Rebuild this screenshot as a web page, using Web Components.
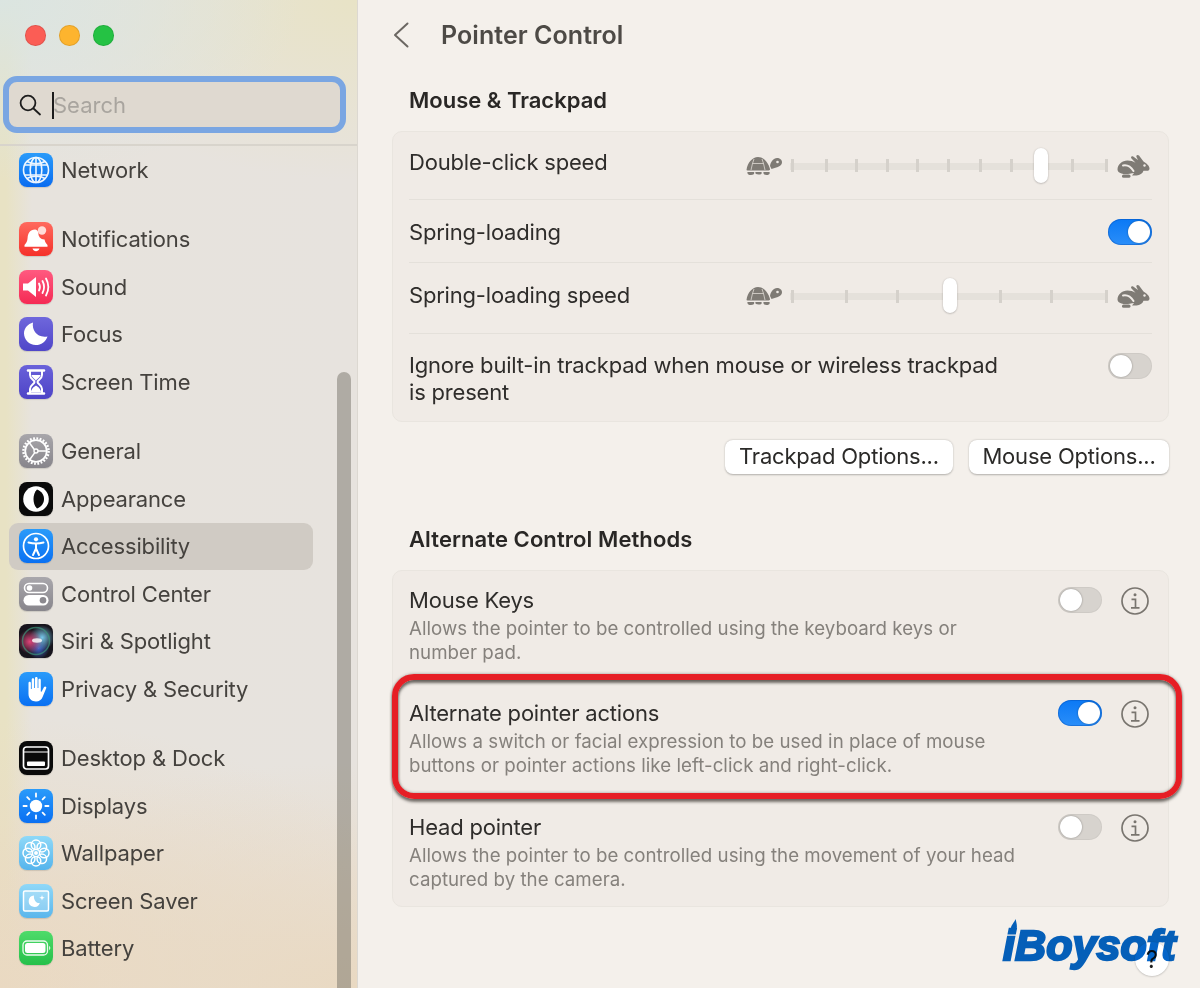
<!DOCTYPE html>
<html lang="en">
<head>
<meta charset="utf-8">
<title>Pointer Control</title>
<style>
html,body{margin:0;padding:0;width:1200px;height:988px;overflow:hidden;background:#f4f0eb;}
body{font-family:Inter,"Liberation Sans",sans-serif;}
</style>
</head>
<body>
<settings-app>
  <side-bar slot="side">
    <side-item icon="network" style="margin-bottom:22px">Network</side-item>
    <side-item icon="bell">Notifications</side-item>
    <side-item icon="sound">Sound</side-item>
    <side-item icon="focus">Focus</side-item>
    <side-item icon="hourglass" style="margin-bottom:22px">Screen Time</side-item>
    <side-item icon="gear">General</side-item>
    <side-item icon="appearance">Appearance</side-item>
    <side-item icon="access" selected>Accessibility</side-item>
    <side-item icon="control">Control Center</side-item>
    <side-item icon="siri">Siri &amp; Spotlight</side-item>
    <side-item icon="hand" style="margin-bottom:22px">Privacy &amp; Security</side-item>
    <side-item icon="dock">Desktop &amp; Dock</side-item>
    <side-item icon="sun">Displays</side-item>
    <side-item icon="flower">Wallpaper</side-item>
    <side-item icon="saver">Screen Saver</side-item>
    <side-item icon="battery">Battery</side-item>
  </side-bar>
  <main-panel slot="main" heading="Pointer Control">
    <section-title style="height:61px">Mouse &amp; Trackpad</section-title>
    <settings-card>
      <setting-row h="68"><span slot="label" style="margin-bottom:7px">Double-click speed</span><speed-slider slot="control" ticks="2,36,66.5,97,127.5,158,190,221,251,282,316.5" thumb="251"></speed-slider></setting-row>
      <setting-row h="63" style="padding-top:2px"><span slot="label">Spring-loading</span><toggle-switch slot="control" on></toggle-switch></setting-row>
      <setting-row h="71"><span slot="label" style="margin-bottom:6px">Spring-loading speed</span><speed-slider slot="control" style="margin-bottom:4px" ticks="2,56,107,159.5,210.5,261.5,316.5" thumb="160"></speed-slider></setting-row>
      <setting-row h="87" last style="padding-top:3px"><span slot="label">Ignore built-in trackpad when mouse or wireless trackpad<br>is present</span><toggle-switch slot="control" style="align-self:flex-start;margin-top:16px"></toggle-switch></setting-row>
    </settings-card>
    <button-bar>
      <option-button style="width:228px">Trackpad Options...</option-button>
      <option-button style="width:200px">Mouse Options...</option-button>
    </button-bar>
    <section-title style="height:63px;margin-top:33px;padding-top:19px;letter-spacing:.08px">Alternate Control Methods</section-title>
    <settings-card>
      <detail-row style="height:113px"><span slot="label">Mouse Keys</span><span slot="desc">Allows the pointer to be controlled using the keyboard keys or<br>number pad.</span></detail-row>
      <detail-row on style="height:114px"><span slot="label">Alternate pointer actions</span><span slot="desc">Allows a switch or facial expression to be used in place of mouse<br>buttons or pointer actions like left-click and right-click.</span></detail-row>
      <detail-row style="height:108px"><span slot="label">Head pointer</span><span slot="desc">Allows the pointer to be controlled using the movement of your head<br>captured by the camera.</span></detail-row>
    </settings-card>
    <highlight-box></highlight-box>
    <help-button></help-button>
    <brand-mark>iBoysoft</brand-mark>
  </main-panel>
</settings-app>

<script>
const ICONS = {
network:{bg:'linear-gradient(#2a9bfa,#0a6cf0)',svg:'<g fill="none" stroke="#fff" stroke-width="1.6" opacity=".92"><circle cx="17" cy="17" r="12.5"/><ellipse cx="17" cy="17" rx="5.8" ry="12.5"/><path d="M17 4.5v25M5.5 12h23M5.5 22h23"/><path d="M8 8.5c5 3 13 3 18 0M8 25.5c5-3 13-3 18 0"/></g>'},
bell:{bg:'linear-gradient(#ff6a5e,#f5312a)',svg:'<path fill="#fff" d="M16 7.500c-5 .4-7.200 3.800-7.400 8.300-.2 3.800-1.300 5.400-3.100 7.200v1.800h23v-1.800c-1.500-1.500-2.600-3-2.900-5.400-3.700.2-6.800-3.200-6.100-7-1-2-2.200-3.200-3.500-3.100z"/><path fill="#fff" d="M13.500 26.500h7c-.6 1.900-2 2.700-3.500 2.700s-2.900-.8-3.500-2.700z"/><circle cx="23" cy="8.500" r="4.200" fill="#ffdcd8"/>'},
sound:{bg:'linear-gradient(#ff5a80,#f52a54)',svg:'<path fill="#fff" d="M4 13.500h5L17 7v20l-8-6.500H4z"/><g fill="none" stroke="#fff" stroke-width="1.800" stroke-linecap="round"><path d="M20 13.500c1.200 2.200 1.200 4.800 0 7"/><path d="M23.500 11c2 3.800 2 8.200 0 12"/><path d="M27 8.500c3 5.400 3 11.600 0 17"/></g>'},
focus:{bg:'linear-gradient(#6f67dc,#5046c8)',svg:'<path fill="#fff" d="M14 5.500c-1.200 7 3.300 14 11.500 14.200 1 0 2-.1 3-.3-1.600 5-6.300 8.600-11.700 8.600C10.100 28 5 22.800 5 16.300 5 11.300 8.900 6.800 14 5.500z"/>'},
hourglass:{bg:'linear-gradient(#6a62da,#4d43c6)',svg:'<g fill="none" stroke="#fff" stroke-width="2"><path d="M9 5.500h16M9 28.500h16" stroke-width="2.600" stroke-linecap="round"/><path d="M11 6v4c0 4 4.500 5 4.500 7s-4.500 3-4.500 7v4M23 6v4c0 4-4.500 5-4.500 7s4.500 3 4.500 7v4"/></g><path fill="#fff" d="M12.500 10h9c-.6 3-4.500 4.500-4.500 6-.2-1.500-3.900-3-4.500-6zM12 27c.2-3.500 3.500-5.500 5-6.500 1.500 1 4.800 3 5 6.500z"/>'},
gear:{bg:'linear-gradient(#a8a6aa,#87858b)',svg:'<g fill="none" stroke="#fff"><circle cx="17" cy="17" r="10.800" stroke-width="1.800"/><circle cx="17" cy="17" r="12.600" stroke-width="2.400" stroke-dasharray="1.800 1.500"/><circle cx="17" cy="17" r="2" stroke-width="1.400"/><path d="M15.500 15.700 10.500 9M19 17h8.500M15.800 18.600 10.800 25.500" stroke-width="1.500"/></g>'},
appearance:{bg:'#0a0a0a',svg:'<circle cx="17" cy="17" r="12.800" fill="#fff"/><path d="M18 7.500C22.800 9.500 25 13 25 17s-2.200 7.500-7 9.500C15.500 24 14.500 20.500 14.500 17s1-7 3.500-9.500z" fill="#0a0a0a"/>'},
access:{bg:'linear-gradient(#2a9bfa,#0a70f2)',svg:'<circle cx="17" cy="17" r="12.500" fill="none" stroke="#fff" stroke-width="1.700"/><circle cx="17" cy="10.300" r="2.100" fill="#fff"/><path fill="none" stroke="#fff" stroke-width="2" stroke-linecap="round" stroke-linejoin="round" d="M9.500 13.500c5 1.300 10 1.300 15 0M17 14.500v6M17 19.500l-3 6.500M17 19.500l3 6.500"/>'},
control:{bg:'linear-gradient(#a9a7ac,#88868c)',svg:'<rect x="5.500" y="6.500" width="23" height="9" rx="4.500" fill="none" stroke="#fff" stroke-width="1.600"/><circle cx="10.500" cy="11" r="2.800" fill="#fff"/><rect x="4.500" y="18" width="25" height="10.500" rx="5.200" fill="#fff"/><circle cx="24" cy="23.200" r="3.300" fill="#8b898f"/>'},
siri:{bg:'radial-gradient(circle at 32% 52%,#e0447a 0,rgba(224,68,122,0) 42%),radial-gradient(circle at 68% 40%,#78c8ea 0,rgba(120,200,234,0) 40%),radial-gradient(circle at 58% 72%,#3f62c8 0,rgba(63,98,200,0) 34%),#17141c',svg:'<circle cx="17" cy="17" r="13.500" fill="none" stroke="#3f9b80" stroke-width="1.500" opacity=".65"/><ellipse cx="18" cy="16.500" rx="5" ry="2.200" fill="#fff" opacity=".8"/>'},
hand:{bg:'linear-gradient(#2a9bfa,#0a70f2)',svg:'<path fill="#fff" d="M9.500 11c0-1.700 2.400-1.700 2.400 0v6h.8V7.500c0-1.700 2.500-1.700 2.500 0V16h.8V6.300c0-1.700 2.600-1.700 2.600 0V16h.8V8c0-1.700 2.400-1.700 2.400 0v11.500l.8.300 2.300-4.500c.9-1.600 3-.7 2.300 1l-3.600 8.700c-1.100 2.800-3.500 4.500-6.600 4.500-4 0-7.500-2.700-7.500-7.500z"/>'},
dock:{bg:'#0a0a0a',svg:'<rect x="4.500" y="6" width="25" height="22" rx="3" fill="none" stroke="#fff" stroke-width="1.700"/><path d="M5 11h24" stroke="#fff" stroke-width="1.200"/><rect x="8" y="20.500" width="18" height="4.500" rx="1" fill="#fff"/>'},
sun:{bg:'linear-gradient(#2a9bfa,#0a6ff2)',svg:'<circle cx="17" cy="17" r="6.200" fill="#fff"/><g stroke="#fff" stroke-width="1.800" stroke-linecap="round"><path d="M17 4.500v3.200M17 26.300v3.200M4.500 17h3.200M26.300 17h3.200M8.200 8.200l2.200 2.200M23.600 23.600l2.200 2.200M25.800 8.200l-2.200 2.200M10.400 23.600l-2.200 2.200"/></g>'},
flower:{bg:'linear-gradient(#8fd9f8,#55b4ec)',svg:'<g fill="none" stroke="#fff" stroke-width="1.500"><circle cx="17" cy="8.800" r="4.800"/><circle cx="17" cy="25.200" r="4.800"/><circle cx="8.800" cy="17" r="4.800"/><circle cx="25.200" cy="17" r="4.800"/><circle cx="11.200" cy="11.200" r="4.800"/><circle cx="22.800" cy="11.200" r="4.800"/><circle cx="11.200" cy="22.800" r="4.800"/><circle cx="22.800" cy="22.800" r="4.800"/></g><circle cx="17" cy="17" r="2" fill="#fff"/>'},
saver:{bg:'linear-gradient(#90d8f8,#5ab6ec)',svg:'<rect x="4.500" y="7" width="25" height="20" rx="1.500" fill="#fff" fill-opacity=".25" stroke="#fff" stroke-width="1.500"/><path fill="#fff" d="M15 11.500a5.700 5.700 0 1 0 5.800 7.500c-3.600.6-6.500-3.300-5.800-7.500z"/><path fill="#fff" d="M23 11l.7 2 2 .7-2 .7-.7 2-.7-2-2-.7 2-.7z"/>'},
battery:{bg:'linear-gradient(#4edb6a,#26c04a)',svg:'<rect x="4" y="10" width="24.500" height="14" rx="4" fill="none" stroke="#fff" stroke-width="1.300" opacity=".9"/><rect x="6" y="12" width="20.500" height="10" rx="2.500" fill="#fff"/><path d="M30 15v4c.8-.3 1.300-1 1.300-2s-.5-1.700-1.300-2z" fill="#fff" opacity=".8"/>'}
};

function el(name, tpl, extra){
  customElements.define(name, class extends HTMLElement{
    constructor(){super();const r=this.attachShadow({mode:'open'});r.innerHTML=tpl;}
    connectedCallback(){ if(extra) extra(this,this.shadowRoot); }
  });
}

el('settings-app',`<style>
:host{display:flex;width:1200px;height:988px;overflow:hidden;font-family:Inter,"Liberation Sans",sans-serif}
</style><slot name="side"></slot><slot name="main"></slot>`);

el('traffic-lights',`<style>
:host{display:flex;gap:13.500px;padding:25px 0 0 25px;height:45px}
i{display:block;width:20.500px;height:20.500px;border-radius:50%;box-sizing:border-box;border:1px solid rgba(0,0,0,.1)}
</style><i style="background:#fb5d55"></i><i style="background:#fdb42e"></i><i style="background:#25c244"></i>`);

el('search-field',`<style>
:host{display:flex;align-items:center;box-sizing:border-box;width:343px;height:57px;margin:6px 0 0 3px;border:6px solid #7aa6e2;border-radius:14px;background:#dfd9d0;padding:1px 0 0 9px;color:#a9a59f;font-size:22px}
svg{flex:none;width:24px;height:24px;margin-right:10px}
b{display:block;width:2px;height:27px;background:#1c1c1c;margin-right:-1px;position:relative}
</style><svg viewBox="0 0 24 24" fill="none" stroke="#1d1d1d" stroke-width="1.800" stroke-linecap="round"><circle cx="10" cy="10" r="7.400"/><path d="M15.500 15.500 22 21.500"/></svg><b></b><span>Search</span>`);

el('side-bar',`<style>
:host{display:flex;flex-direction:column;flex:none;width:358px;height:988px;position:relative;box-sizing:border-box;border-right:1px solid #dcd8d1;
background:
 radial-gradient(300px 180px at 0 0,#dbe5e1 0,rgba(219,229,225,0) 100%),
 radial-gradient(420px 240px at 100% 0,#e8e3c6 0,rgba(232,227,198,0) 75%),
 radial-gradient(700px 300px at 100% 100%,#e9d9c2 0,rgba(233,217,194,0) 75%),
 radial-gradient(500px 300px at 0 100%,#ead9c2 0,rgba(234,217,194,0) 90%),
 linear-gradient(90deg,#e8e2c4 0,#e8e2c4 6px,#e7e3dd 32px,#e7e3de 100%)}
.head{height:146px;box-sizing:border-box;flex:none;border-bottom:2px solid #d8d4cc}
.list{flex:1;overflow:hidden;padding:0 0 0 9px}
.bar{position:absolute;left:337px;top:372px;width:14px;height:640px;border-radius:7px;background:rgba(115,110,100,.48)}
</style><div class="head"><traffic-lights></traffic-lights><search-field></search-field></div><div class="list"><slot></slot></div><div class="bar"></div>`);

el('side-item',`<style>
:host{display:flex;align-items:center;width:304px;height:47.500px;border-radius:9px;font-size:22px;letter-spacing:-.16px;color:#45423e;padding-left:10px;box-sizing:border-box;gap:8px}
:host([selected]){background:#d0cbc4}
.ic{flex:none;width:34px;height:34px;border-radius:8px;overflow:hidden;box-shadow:0 1px 1px rgba(0,0,0,.12)}
svg{display:block;width:34px;height:34px}
</style><div class="ic"><svg viewBox="0 0 34 34"></svg></div><slot></slot>`,(h,r)=>{
  const d=ICONS[h.getAttribute('icon')];const c=r.querySelector('.ic');
  c.style.background=d.bg; r.querySelector('svg').innerHTML=d.svg;
});

el('main-panel',`<style>
:host{display:flex;flex-direction:column;flex:1;min-width:0;height:988px;position:relative;box-sizing:border-box;padding:0 31px 0 34px;background:#f4f0eb}
header{display:flex;align-items:center;height:70px;flex:none;color:#4d4a46;font-size:25px;font-weight:600;letter-spacing:.06px}
svg{width:16px;height:26px;margin:0 32px 0 1px;flex:none}
</style><header><svg viewBox="0 0 16 26" fill="none" stroke="#6b6762" stroke-width="2" stroke-linecap="round" stroke-linejoin="round"><path d="M14.500 1.500 2 13l12.500 11.500"/></svg><span></span></header><slot></slot>`,(h,r)=>{
  r.querySelector('span').textContent=h.getAttribute('heading');
});

el('section-title',`<style>
:host{display:block;box-sizing:border-box;padding:17px 0 0 17px;font-size:22px;font-weight:600;color:#292725}
</style><slot></slot>`);

el('settings-card',`<style>
:host{display:block;box-sizing:border-box;width:777px;background:#f0ebe6;border:1px solid #e9e5df;border-radius:10px;padding:0 16px}
</style><slot></slot>`);

el('setting-row',`<style>
:host{display:flex;align-items:center;justify-content:space-between;box-sizing:border-box;font-size:22px;letter-spacing:-.2px;color:#2f2d2b;border-bottom:1px solid #e4e0da;line-height:27px}
:host([last]){border-bottom:none}
</style><slot name="label"></slot><slot name="control"></slot>`,(h)=>{
  h.style.height=h.getAttribute('h')+'px';
});

el('detail-row',`<style>
:host{display:flex;box-sizing:border-box;padding-top:14px;position:relative;justify-content:space-between}
.t{font-size:22px;letter-spacing:-.2px;color:#2f2d2b;line-height:30px}
.d{font-size:18.700px;letter-spacing:.03px;color:#85817c;line-height:24px;margin-top:2px}
.c{display:flex;align-items:flex-start;gap:19px;padding:2px 3px 0 0}
</style><div><div class="t"><slot name="label"></slot></div><div class="d"><slot name="desc"></slot></div></div><div class="c"><toggle-switch></toggle-switch><info-button></info-button></div>`,(h,r)=>{
  if(h.hasAttribute('on')) r.querySelector('toggle-switch').setAttribute('on','');
});

customElements.define('toggle-switch',class extends HTMLElement{
  constructor(){super();this.attachShadow({mode:'open'}).innerHTML=`<style>
:host{display:flex;flex:none;box-sizing:border-box;width:44px;height:26px;padding:2px;border-radius:13px;background:#d7d3ce;justify-content:flex-start;box-shadow:inset 0 0 0 1px rgba(0,0,0,.04)}
:host([on]){background:linear-gradient(#0b79f5,#2a8ef9);justify-content:flex-end;box-shadow:inset 0 0 0 1px rgba(0,70,170,.35)}
i{display:block;width:22px;height:22px;border-radius:50%;background:#fff;box-shadow:0 0 2px rgba(0,0,0,.4)}
</style><i></i>`;}
});

el('info-button',`<style>
:host{display:block;flex:none;width:28px;height:28px}
svg{display:block;width:28px;height:28px}
</style><svg viewBox="0 0 28 28" fill="none" stroke="#79756f" stroke-width="1.700"><circle cx="14" cy="14" r="13"/><circle cx="14" cy="7.800" r="1.500" fill="#79756f" stroke="none"/><path d="M10.500 12.300h4v8.500M10 20.800h8.500"/></svg>`);

el('speed-slider',`<style>
:host{display:flex;align-items:center;gap:8px;flex:none;margin-right:2px}
svg{flex:none;display:block}
.t{position:relative;width:318px;height:36px;display:flex;align-items:center}
.t::before{content:"";position:absolute;left:0;right:0;top:15px;height:7px;background:#e5e1db}
.t i{display:block;position:absolute;top:11.500px;width:3px;height:13px;margin-left:-1.500px;background:#d5d1cb}
.k{position:absolute;top:0;width:14px;height:35px;margin-left:-7px;border-radius:7px;background:#fff;box-shadow:0 .5px 2px rgba(0,0,0,.3)}
</style>
<svg width="36" height="22" viewBox="0 0 36 22" fill="#7f7b75"><path d="M0.500 15C1.500 7.500 6.500 2 12 2c5.500 0 10.500 5.500 12 12 .2 1-.4 1.500-1.300 1.500H1.500c-.7 0-1.100-.2-1-.5z"/><g fill="none" stroke="#f0ebe6" stroke-width=".9" opacity=".75"><path d="M8 4 6.500 8.500h11L16 4M6.500 8.500 5 15M17.500 8.500 19 15"/></g><path d="M1.500 17h6.500c.8 2-.4 3-3 3-2.500 0-4-1-3.500-3zM9.500 17h6c.6 1.600-.2 2.500-3 2.500-2.700 0-3.600-.9-3-2.500zM17.500 17h6c.7 2-.8 3-3 3-2 0-3.500-1-3-3z"/><path d="M24 11c.5-4 3.500-8 7-8 2.800 0 5 1.700 5 4.300 0 2.900-3 4.700-5.800 5.200L25.500 14z"/><circle cx="31.500" cy="7" r="1.300" fill="#f0ebe6"/></svg>
<div class="t"></div>
<svg width="34" height="24" viewBox="0 0 34 24" fill="#7f7b75"><path d="M1.500 15.500C1.500 10.500 6 6.500 11.500 6.500c3 0 5.500.8 8 2.200l-4-4.200c-1.200-1.500 0-3 1.700-2L22 6l-1.500-3c-.7-1.800 1-2.700 2.500-1.500l4.500 6c3 1.500 6 4.500 6 7 0 1.500-1 2.300-2.500 2.300h-3.500c-1 2.700-3.500 4.700-7 4.700H16l2-2.500c-4 .8-9 1.500-12.500.5-2.500-.8-4-2-4-4z"/><path d="M7 11.500c4-.8 8 1.500 10.500 5.500" fill="none" stroke="#f0ebe6" stroke-width="2" stroke-linecap="round"/><rect x="6" y="20.500" width="8.500" height="3.300" rx="1.600"/><circle cx="28.500" cy="11.500" r="1.200" fill="#f0ebe6"/></svg>`,(h,r)=>{
  const t=r.querySelector('.t');
  h.getAttribute('ticks').split(',').forEach(x=>{const i=document.createElement('i');i.style.left=x+'px';t.appendChild(i);});
  const k=document.createElement('div');k.className='k';k.style.left=h.getAttribute('thumb')+'px';t.appendChild(k);
});

el('button-bar',`<style>
:host{display:flex;justify-content:flex-end;gap:16px;width:777px;margin-top:18px}
</style><slot></slot>`);

el('option-button',`<style>
:host{display:flex;align-items:center;justify-content:center;height:34px;box-sizing:border-box;padding-bottom:3px;background:#fff;border-radius:8px;font-size:22px;letter-spacing:-.2px;color:#2b2a28;box-shadow:0 .5px 2px rgba(0,0,0,.28)}
</style><slot></slot>`);

el('highlight-box',`<style>
:host{display:block;position:absolute;left:34px;top:674px;width:790px;height:125px;box-sizing:border-box;border:6px solid #e61e25;border-radius:22px;box-shadow:0 3px 3px rgba(60,55,50,.65),0 0 3px rgba(60,55,50,.5),inset 0 3px 3px rgba(60,55,50,.7),inset 0 0 3px rgba(60,55,50,.5)}
</style>`);

el('help-button',`<style>
:host{display:flex;align-items:center;justify-content:center;position:absolute;left:777px;top:942px;width:34px;height:34px;border-radius:50%;background:#fff;box-shadow:0 .5px 2px rgba(0,0,0,.25);font-size:24px;color:#1d1d1d}
</style>?`);

el('brand-mark',`<style>
:host{display:block;position:absolute;left:645px;top:915px;font-family:"Liberation Sans",Arial,sans-serif;font-size:43px;font-weight:700;font-style:italic;color:#0565c8;letter-spacing:.08px;-webkit-text-stroke:2.400px #0565c8;line-height:60px;mix-blend-mode:multiply}
svg{position:absolute;left:7px;top:4px;width:8px;height:13px}
</style><svg viewBox="0 0 8 13" fill="#0565c8"><path d="M5.500 0C6.500 4 7.500 7 6.500 10 5.500 13 1 13 1 9 1 6 4 4 5.500 0z"/></svg><slot></slot>`);
</script>
</body>
</html>
